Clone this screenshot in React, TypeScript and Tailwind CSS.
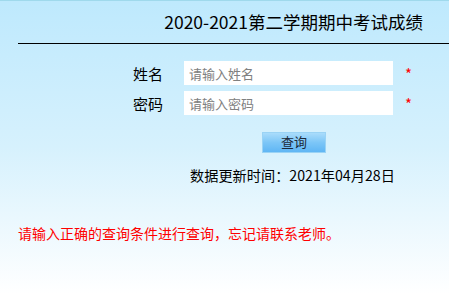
import React from "react";

export default function App() {
  const font = { fontFamily: '"Noto Sans CJK SC", "Noto Sans", sans-serif' };
  return (
    <div
      className="w-[449px] h-[294px] overflow-hidden border-t border-[#9fd9ec] bg-gradient-to-b from-[#bee9fd] via-[#d6f1fd] via-50% to-[#ffffff] text-black"
      style={font}
    >
      <div className="h-[42px] flex items-center justify-end pr-[26px] text-[17.5px] leading-none">
        2020-2021第二学期期中考试成绩
      </div>
      <div className="ml-[18px] h-px bg-black" />
      <div className="mt-[17px] flex flex-col gap-[6px]">
        <div className="flex items-center h-[24px]">
          <div className="w-[163px] text-right text-[15px] leading-none">姓名</div>
          <input
            className="ml-[21px] w-[209px] h-[24px] bg-white px-[5px] text-[13px] outline-none placeholder:text-[#808080]"
            placeholder="请输入姓名"
            style={font}
          />
          <span className="ml-[12px] text-[#ff0000] text-[15px] leading-none">*</span>
        </div>
        <div className="flex items-center h-[24px]">
          <div className="w-[163px] text-right text-[15px] leading-none">密码</div>
          <input
            className="ml-[21px] w-[209px] h-[24px] bg-white px-[5px] text-[13px] outline-none placeholder:text-[#808080]"
            placeholder="请输入密码"
            style={font}
          />
          <span className="ml-[12px] text-[#ff0000] text-[15px] leading-none">*</span>
        </div>
      </div>
      <div className="mt-[17px] flex">
        <button
          className="ml-[262px] w-[64px] h-[21px] pb-[2px] border border-[#9ad3f5] bg-gradient-to-b from-[#a9dcfb] via-[#7cc6f7] to-[#5fb6f4] text-[13px] leading-none text-[#1d2a3a] flex items-center justify-center"
          style={font}
        >
          查询
        </button>
      </div>
      <div className="mt-[12px] pl-[190px] text-[14.2px] leading-[20px] whitespace-nowrap">
        数据更新时间：2021年04月28日
      </div>
      <div className="mt-[38px] pl-[18px] text-[14px] leading-[20px] text-[#ff0000] whitespace-nowrap">
        请输入正确的查询条件进行查询，忘记请联系老师。
      </div>
    </div>
  );
}
